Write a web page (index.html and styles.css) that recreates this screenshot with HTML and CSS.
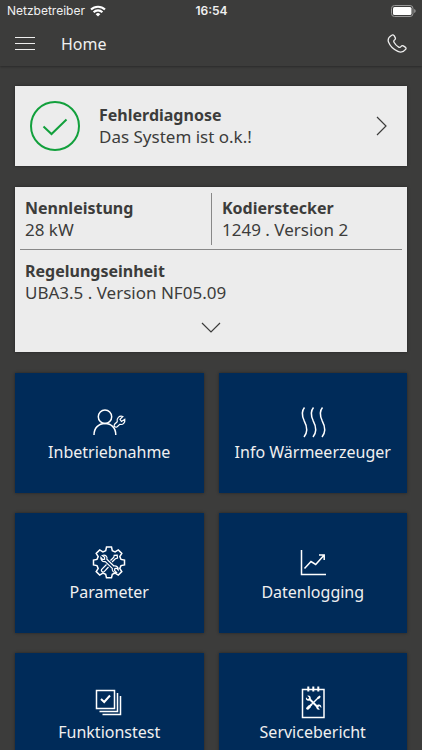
FILE: index.html
```html
<!DOCTYPE html>
<html lang="de">
<head>
<meta charset="utf-8">
<meta name="viewport" content="width=device-width, initial-scale=1">
<title>Home</title>
<link rel="stylesheet" href="styles.css">
</head>
<body>
<header class="top">
  <div class="status">
    <span class="carrier">Netzbetreiber
      <svg width="16" height="12" viewBox="0 0 16 12" aria-hidden="true"><g fill="none" stroke="#fff" stroke-width="2.1"><path d="M1 4.600a10 10 0 0 1 14 0"/><path d="M3.600 7.200a6.200 6.200 0 0 1 8.800 0"/></g><path d="M8 11.600 5.700 9.200a3.300 3.300 0 0 1 4.600 0z" fill="#fff"/></svg>
    </span>
    <span class="clock">16:54</span>
    <span class="battery">
      <svg width="25" height="12" viewBox="0 0 25 12" aria-hidden="true"><rect x=".5" y=".5" width="21.500" height="11" rx="3" fill="none" stroke="#999"/><rect x="2" y="2" width="18.500" height="8" rx="1.500" fill="#fff"/><path d="M23.200 4v4q1.500-.6 1.500-2t-1.500-2z" fill="#999"/></svg>
    </span>
  </div>
  <div class="bar">
    <button class="icon-button" type="button" aria-label="Menü">
      <svg width="20" height="16" viewBox="0 0 20 16"><path d="M0 1.500h20M0 7.500h20M0 13.500h20" stroke="#eee" stroke-width="1.200"/></svg>
    </button>
    <h1>Home</h1>
    <button class="icon-button call" type="button" aria-label="Anrufen">
      <svg width="20" height="20" viewBox="0 0 20 20"><path d="M4.700 1.200C5.600.5 6.500.8 7.100 1.700l1.100 1.900c.5.900.2 1.600-.5 2.200-1.100.8-1.300 1.300-.7 2.400 1 1.900 2.700 3.700 4.700 4.900 1 .6 1.600.3 2.400-.7.600-.8 1.400-1 2.200-.5l1.900 1.200c.9.600 1.100 1.500.4 2.300-2 2.600-4.600 3.300-7.700 2C6.400 15.500 3.100 12.200 1.500 8.100.5 5.200 1.800 2.900 4.700 1.200z" fill="none" stroke="#eee" stroke-width="1.300" stroke-linejoin="round"/></svg>
    </button>
  </div>
</header>
<main>
  <a class="card diagnosis" href="#fehlerdiagnose">
    <svg width="50" height="50" viewBox="0 0 50 50" aria-hidden="true"><g fill="none" stroke="#12a03c" stroke-width="2"><circle cx="25" cy="25" r="24"/><path d="m13.500 25.500 8 7.500 15-14.500"/></g></svg>
    <span class="entry"><strong>Fehlerdiagnose</strong><span>Das System ist o.k.!</span></span>
    <svg class="next" width="12" height="20" viewBox="0 0 12 20" aria-hidden="true"><path d="m1 1 9 9-9 9" fill="none" stroke="#3c3c3b" stroke-width="1.200"/></svg>
  </a>
  <section class="card device">
    <div class="pair">
      <div class="entry"><strong>Nennleistung</strong><span>28 kW</span></div>
      <div class="entry"><strong>Kodierstecker</strong><span>1249 . Version 2</span></div>
    </div>
    <div class="entry unit"><strong>Regelungseinheit</strong><span>UBA3.5 . Version NF05.09</span></div>
    <button class="expand" type="button" aria-label="Mehr anzeigen">
      <svg width="20" height="12" viewBox="0 0 20 12"><path d="m1 1 9 9 9-9" fill="none" stroke="#3c3c3b" stroke-width="1.200"/></svg>
    </button>
  </section>
  <nav class="tiles">
    <a href="#inbetriebnahme">
      <svg viewBox="0 0 40 36" aria-hidden="true"><circle cx="16" cy="12.700" r="6.700"/><path d="M5 31c0-7 4.500-11.500 11-11.500S26.800 24 26.800 31"/><path class="fine" d="M33.800 12.500 31 15.300l1.500 2.200 3.300-2.300c.6 3.700-1.800 5.900-5 5.100l-2.600 2.500c-2 1.200-3.900-.7-2.600-2.600l2.600-2.500c-.8-3.600 2-6.300 5.600-5.200z"/></svg>
      <span>Inbetriebnahme</span>
    </a>
    <a href="#info">
      <svg viewBox="0 0 40 36" aria-hidden="true"><path d="M11.500 3.500c-3 3.500-3 7.500-.3 13.300 3.500 6.500 3.500 11.500-.2 16.200M20.500 3.500c-3 3.500-3 7.500-.3 13.300 3.500 6.500 3.500 11.500-.2 16.200M29.500 3.500c-3 3.500-3 7.500-.3 13.300 3.500 6.500 3.500 11.500-.2 16.200"/></svg>
      <span>Info Wärmeerzeuger</span>
    </a>
    <a href="#parameter">
      <svg viewBox="0 0 40 36" aria-hidden="true"><path d="M17.500 3h5l.8 3.700 2.800 1.200 3.200-2 3.500 3.500-2 3.200 1.200 2.800 3.500.7v4.800l-3.500.7-1.200 2.800 2 3.200-3.500 3.500-3.200-2-2.800 1.200-.8 3.500h-5l-.8-3.500-2.800-1.200-3.200 2-3.500-3.500 2-3.200-1.200-2.800-3.500-.7v-4.800l3.500-.7 1.200-2.800-2-3.200 3.500-3.500 3.200 2 2.800-1.200z"/><g class="fine"><path d="M13.300 11.500l2.300 1.800v1.900l-1.900.4-1.800-2.300c-.5 2.600 1.600 4.900 4.400 4.300l7 6.800c-.6 2.700 1.400 4.600 4.200 4l-2-2 .4-1.800 1.900-.4 1.400 1.800c.3-2.800-1.600-4.500-4.300-4l-7-6.800c.7-2.700-1.400-4.700-4.600-3.700z"/><path d="m21.500 16.500 3.300-3.200.4-2 3-.2.300 3-2.200.7-3.200 3.200M17.500 20.500l-5 5c-.7 1.500 1 3.200 2.500 2.300l4.500-4.800"/></g></svg>
      <span>Parameter</span>
    </a>
    <a href="#datenlogging">
      <svg viewBox="0 0 40 36" aria-hidden="true"><path d="M8.500 6v24.500H33M11.500 24.500l6.500-7 4.700 3L31 11.200M26 11h5.200v5"/></svg>
      <span>Datenlogging</span>
    </a>
    <a href="#funktionstest">
      <svg viewBox="0 0 40 36" aria-hidden="true"><path d="M7.500 6.500h18v18h-18zM28.500 9v18.500H10.500M31.500 12v18.500H13.500"/><path class="bold" d="m12 15 3.200 3 5.800-6.500"/></svg>
      <span>Funktionstest</span>
    </a>
    <a href="#servicebericht">
      <svg viewBox="0 0 40 36" aria-hidden="true"><path d="M9.500 5.500h21.500v28H9.500z"/><path class="bold" d="M15.300 2.500v5M20.300 2.500v5M25.300 2.500v5"/><path class="bold" d="m16 14.500 9 9M15 24l4-4"/><path d="m19 20 6-6"/><path class="solid" d="m24 13.500 2.500-2 1.300 1.300-2 2.500zM14.300 11.700l1.800 1.800-.3 1.200-1.200.3-1.600-1.800c-.6 2.500 1 4.100 3.300 3.500l1.400-1.400c.6-2.300-1-4.200-3.400-3.600zM27 25.600l-1.800-1.800.3-1.200 1.200-.3 1.600 1.800c.4-2.500-1-4.200-3.500-3.500l-1.400 1.400c-.5 2.400 1 4.300 3.600 3.600zM13.500 23.500l2.500-2.500 2 2-2.500 2.500q-1 .6-2-.2t0-1.800z"/></svg>
      <span>Servicebericht</span>
    </a>
  </nav>
</main>
</body>
</html>
```
FILE: styles.css
```css
* {
  box-sizing: border-box;
}

html {
  scrollbar-width: none;
}

body {
  margin: 0;
  background: #3c3c3b;
  color: #3c3c3b;
  font: 16px/21px "Noto Sans", sans-serif;
}

.top {
  color: #f0f0f0;
  box-shadow: 0 1px 2px rgba(0, 0, 0, 0.3);
}

.status {
  display: grid;
  grid-template-columns: 1fr auto 1fr;
  align-items: center;
  height: 22px;
  padding: 0 6px 0 7px;
  font: 12px/22px Inter, sans-serif;
}

.carrier {
  display: flex;
  align-items: center;
  gap: 5px;
}

.clock {
  font-weight: 600;
}

.battery {
  display: flex;
  justify-content: flex-end;
}

.bar {
  display: flex;
  align-items: center;
  height: 44px;
  padding: 0 15px;
}

h1 {
  margin: 0 0 0 26px;
  font-size: 16px;
  font-weight: 400;
}

button {
  padding: 0;
  border: 0;
  background: none;
  cursor: pointer;
}

.icon-button {
  display: flex;
}

.call {
  margin-left: auto;
}

main {
  padding: 20px 15px;
}

a {
  color: inherit;
  text-decoration: none;
}

.card {
  background: #ececec;
  box-shadow: 0 0 3px rgba(0, 0, 0, 0.4);
  margin-bottom: 21px;
}

.diagnosis {
  display: flex;
  align-items: center;
  gap: 19px;
  padding: 15px 19px 15px 15px;
}

.next {
  margin-left: auto;
}

.entry {
  display: flex;
  flex-direction: column;
  font-size: 17px;
}

strong {
  font-size: 16px;
  font-weight: 700;
}

.device {
  padding: 6px 5px 18px;
}

.pair {
  display: grid;
  grid-template-columns: 1fr 1fr;
  padding-bottom: 4px;
  border-bottom: 1px solid #888;
}

.pair .entry {
  padding: 5px;
}

.pair .entry + .entry {
  padding-left: 10px;
  border-left: 1px solid #888;
}

.unit {
  padding: 11px 5px 0;
}

.expand {
  display: flex;
  margin: 19px auto 0;
}

.tiles {
  display: grid;
  grid-template-columns: 1fr 1fr;
  grid-auto-rows: 120px;
  gap: 20px 15px;
}

.tiles a {
  display: flex;
  flex-direction: column;
  align-items: center;
  padding-top: 31px;
  gap: 2px;
  background: #002b59;
  box-shadow: 0 0 3px rgba(0, 0, 0, 0.4);
  color: #f0f0f0;
}

.tiles svg {
  width: 40px;
  height: 36px;
  fill: none;
  stroke: #fff;
  stroke-width: 1.5;
}

.tiles .fine {
  stroke-width: 1.2;
}

.tiles .bold {
  stroke-width: 2;
}

.tiles .solid {
  fill: #fff;
  stroke: none;
}
```
